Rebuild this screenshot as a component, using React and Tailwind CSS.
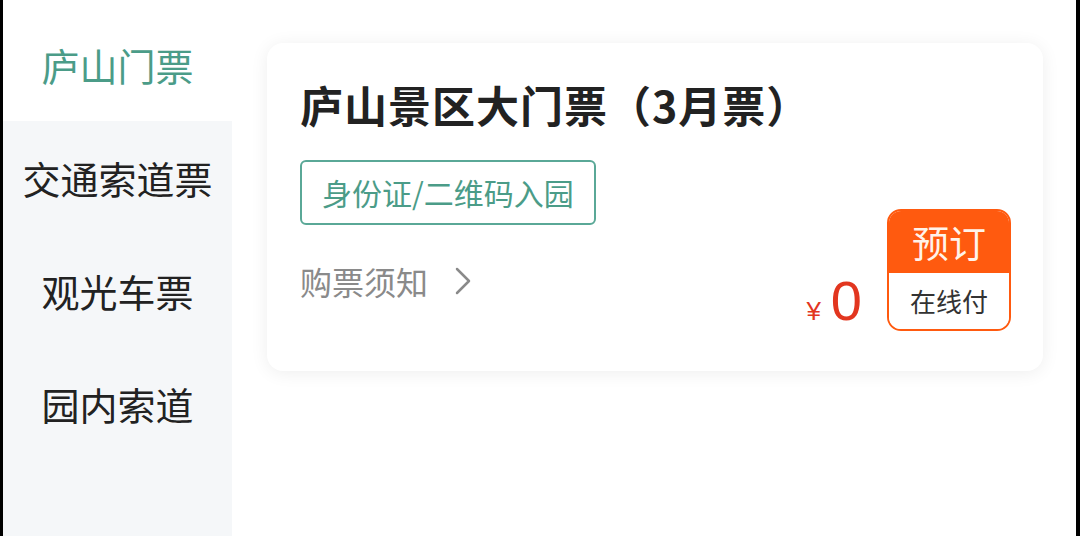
import React, { useState } from "react";

const tabs = ["庐山门票", "交通索道票", "观光车票", "园内索道"];

const App = () => {
  const [active, setActive] = useState(0);

  return (
    <div
      className="w-[1080px] h-[536px] flex bg-black overflow-hidden"
      style={{ fontFamily: '"Noto Sans CJK SC", "Noto Sans", sans-serif' }}
    >
      <div className="ml-[3px] mr-[4px] flex-1 flex bg-white">
        {/* side menu */}
        <div className="w-[229px] bg-[#f5f7f9] flex flex-col">
          {tabs.map((t, i) => (
            <button
              key={t}
              onClick={() => setActive(i)}
              className={
                i === 0
                  ? "h-[121px] pt-[8px] flex items-center justify-center text-[38px] leading-none " +
                    (active === i ? "bg-white text-[#4b9c88]" : "text-[#222]")
                  : "h-[113px] flex items-center justify-center text-[38px] leading-none " +
                    (active === i ? "bg-white text-[#4b9c88]" : "text-[#222]")
              }
            >
              {t}
            </button>
          ))}
        </div>

        {/* ticket list */}
        <div className="flex-1 pl-[35px] pr-[33px] pt-[43px]">
          <div className="h-[328px] rounded-[16px] bg-white shadow-[0_2px_18px_rgba(0,0,0,0.07)] pl-[33px] pr-[32px] pt-[40px] flex">
            <div className="flex-1">
              <h2 className="text-[43px] font-bold text-[#222] leading-none tracking-[1px]">
                庐山景区大门票（3月票）
              </h2>
              <div className="mt-[34px] inline-flex items-center h-[65px] px-[20px] border-2 border-[#5aa897] rounded-[6px] text-[30px] text-[#4b9c88]">
                身份证/二维码入园
              </div>
              <div className="mt-[40px] flex items-center gap-[26px] text-[32px] text-[#8a8a8a] leading-none">
                <span>购票须知</span>
                <svg width="18" height="30" viewBox="0 0 18 30" fill="none">
                  <path d="M3 3 L15 15 L3 27" stroke="#8a8a8a" strokeWidth="2.5" strokeLinecap="round" strokeLinejoin="round" />
                </svg>
              </div>
            </div>
            <div className="mt-[126px] self-start flex items-end gap-[25px]">
              <div
                className="flex items-baseline text-[#e2361f] leading-none mb-[2px]"
                style={{ fontFamily: '"Liberation Sans", sans-serif' }}
              >
                <span className="text-[26px] mr-[10px]">¥</span>
                <span className="text-[56px]">0</span>
              </div>
              <div className="w-[124px] h-[122px] rounded-[14px] border-2 border-[#ff5a0f] overflow-hidden flex flex-col">
                <div className="h-[62px] bg-[#ff5a0f] flex items-center justify-center text-[#fff3ea] text-[37px] leading-none">
                  预订
                </div>
                <div className="flex-1 bg-white flex items-center justify-center text-[26px] text-[#333] leading-none">
                  在线付
                </div>
              </div>
            </div>
          </div>
        </div>
      </div>
    </div>
  );
};

export default App;
